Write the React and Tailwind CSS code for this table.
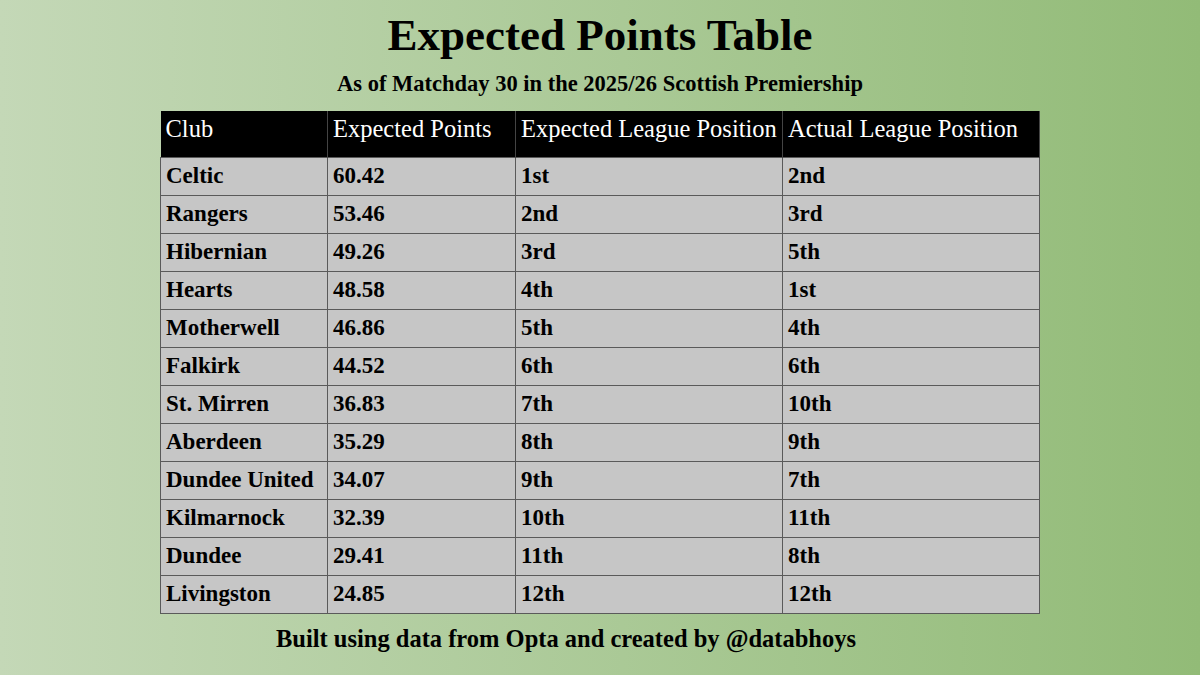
const rows = [
  ['Celtic', '60.42', '1st', '2nd'],
  ['Rangers', '53.46', '2nd', '3rd'],
  ['Hibernian', '49.26', '3rd', '5th'],
  ['Hearts', '48.58', '4th', '1st'],
  ['Motherwell', '46.86', '5th', '4th'],
  ['Falkirk', '44.52', '6th', '6th'],
  ['St. Mirren', '36.83', '7th', '10th'],
  ['Aberdeen', '35.29', '8th', '9th'],
  ['Dundee United', '34.07', '9th', '7th'],
  ['Kilmarnock', '32.39', '10th', '11th'],
  ['Dundee', '29.41', '11th', '8th'],
  ['Livingston', '24.85', '12th', '12th'],
];

export default function App() {
  return (
    <div
      className="w-[1200px] h-[675px] flex flex-col items-center bg-gradient-to-r from-[#c4d8b7] to-[#92bb77] text-black"
      style={{ fontFamily: '"Liberation Serif", "DejaVu Serif", serif' }}
    >
      <h1 className="mt-[9px] text-[45px] leading-[52px] font-bold">Expected Points Table</h1>
      <p className="mt-[11px] text-[22.5px] leading-[24px] font-bold">
        As of Matchday 30 in the 2025/26 Scottish Premiership
      </p>

      <table className="mt-[15px] w-[879px] border-collapse table-fixed">
        <colgroup>
          <col className="w-[167px]" />
          <col className="w-[188px]" />
          <col className="w-[267px]" />
          <col className="w-[257px]" />
        </colgroup>
        <thead>
          <tr className="bg-black text-white h-[46px]">
            {['Club', 'Expected Points', 'Expected League Position', 'Actual League Position'].map((h) => (
              <th key={h} className="font-normal text-[24.5px] leading-[28px] text-left align-top pt-[4px] px-[5px] border-r border-[#444] whitespace-nowrap">
                {h}
              </th>
            ))}
          </tr>
        </thead>
        <tbody>
          {rows.map((r) => (
            <tr key={r[0]} className="bg-[#c6c6c6] h-[38px]">
              {r.map((c, i) => (
                <td key={i} className="font-bold text-[23px] leading-[28px] px-[5px] border border-[#5a5a5a] whitespace-nowrap">
                  {c}
                </td>
              ))}
            </tr>
          ))}
        </tbody>
      </table>

      <p className="mt-[11px] mr-[68px] text-[24.5px] leading-[28px] font-bold">
        Built using data from Opta and created by @databhoys
      </p>
    </div>
  );
}
